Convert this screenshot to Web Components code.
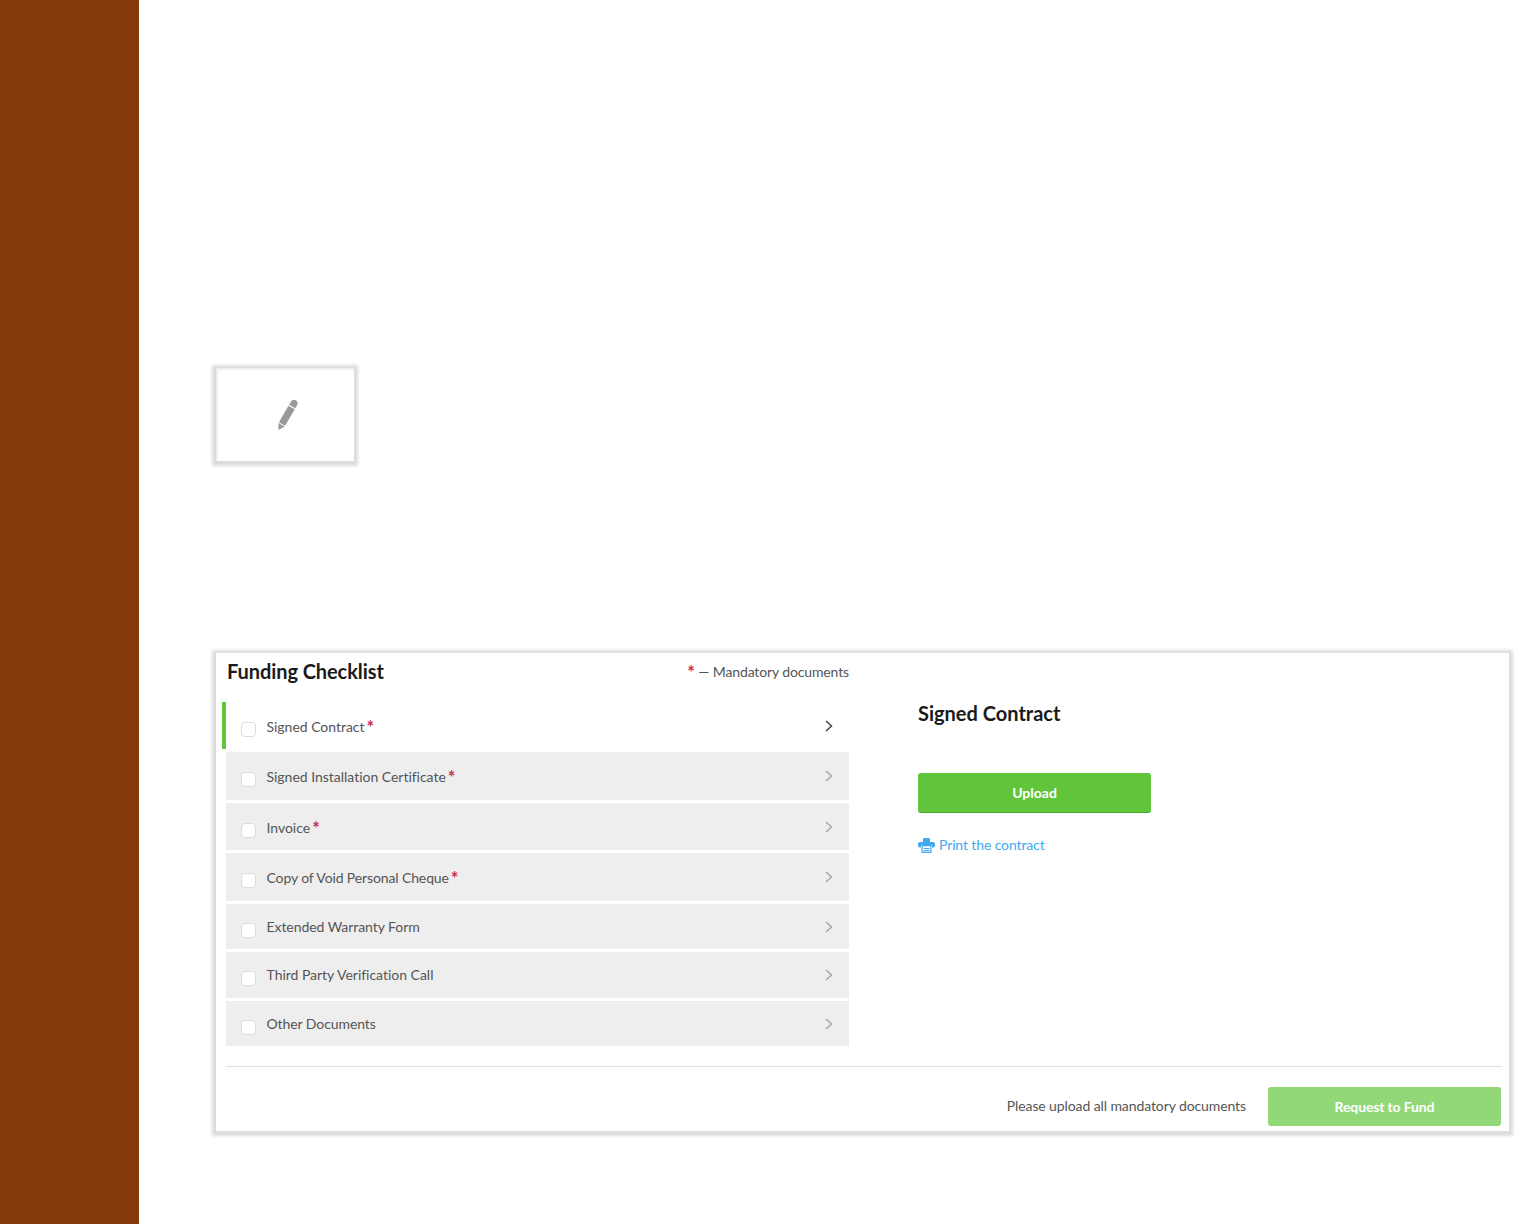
<!DOCTYPE html>
<html>
<head>
<meta charset="utf-8">
<title>Funding Checklist</title>
<style>
    html, body { margin: 0; padding: 0; background: #fff; }
    body { font-family: 'Lato', sans-serif; color: #555; height: 1224px; overflow: hidden; }
</style>
</head>
<body>
<app-shell>
    <signature-box></signature-box>
    <funding-checklist>
        <check-row active mandatory h="47">Signed Contract</check-row>
        <check-row mandatory h="48">Signed Installation Certificate</check-row>
        <check-row mandatory h="47">Invoice</check-row>
        <check-row mandatory h="48" style="--ls:-.12px">Copy of Void Personal Cheque</check-row>
        <check-row h="45" style="--ls:-.06px">Extended Warranty Form</check-row>
        <check-row h="46">Third Party Verification Call</check-row>
        <check-row h="45" style="--ls:-.08px">Other Documents</check-row>
    </funding-checklist>
</app-shell>
<script>
class AppShell extends HTMLElement {
    constructor() {
        super();
        this.attachShadow({ mode: 'open' });
        this.shadowRoot.innerHTML = `
            <style>
                :host { display: flex; height: 1224px; }
                .sidebar { width: 139px; flex: none; background: #833909; }
                .main {
                    flex: 1;
                    min-width: 0;
                    display: flex;
                    flex-direction: column;
                    gap: 192px;
                    padding: 368px 10px 0 77px;
                }
            </style>
            <div class="sidebar"></div>
            <div class="main"><slot></slot></div>
        `;
    }
}

class SignatureBox extends HTMLElement {
    constructor() {
        super();
        this.attachShadow({ mode: 'open' });
        this.shadowRoot.innerHTML = `
            <style>
                :host {
                    display: flex;
                    align-items: center;
                    justify-content: center;
                    width: 138px;
                    height: 93px;
                    box-sizing: border-box;
                    background: #fff;
                    border-top: 2px solid #efefef;
                    border-left: 2px solid #efefef;
                    box-shadow: 0 1px 3px 4px #dcdcdc;
                }
                svg { width: 24px; height: 34px; filter: blur(.7px); margin: 0 0 2px 3px; }
            </style>
            <svg viewBox="0 0 24 34">
                <path fill="#999" d="M19.300 10.300 13.100 6.700 15 3.400A3.600 3.600 0 0 1 21.200 7Z"/>
                <path fill="#999" d="M12.500 7.700 18.700 11.300 9.100 27.800 2.900 24.200Z"/>
                <path fill="#999" d="M2.400 25 8.600 28.600 2.500 32Z"/>
            </svg>
        `;
    }
}

class FundingChecklist extends HTMLElement {
    constructor() {
        super();
        this.attachShadow({ mode: 'open' });
        this.shadowRoot.innerHTML = `
            <style>
                :host {
                    display: block;
                    width: 1293px;
                    height: 478px;
                    box-sizing: border-box;
                    background: #fff;
                    box-shadow: 0 1px 3px 4px #dcdcdc;
                    padding: 0 7px 0 10px;
                    font-size: 14px;
                    line-height: 20px;
                }
                .columns { display: flex; height: 413px; }
                .left { width: 623px; flex: none; }
                .head {
                    display: flex;
                    justify-content: space-between;
                    height: 49px;
                    padding-top: 4px;
                    box-sizing: border-box;
                }
                h2 {
                    margin: 0;
                    font-size: 20px;
                    line-height: 28px;
                    font-weight: 700;
                    color: #1a1a1a;
                }
                .head h2 { margin-left: 1px; letter-spacing: -.08px; }
                .legend { padding-top: 5px; color: #555; letter-spacing: -.13px; }
                .legend i {
                    color: #c9304a;
                    font-style: normal;
                    font-weight: 700;
                    font-size: 18px;
                    line-height: 0;
                    letter-spacing: 0;
                    position: relative;
                    top: 2px;
                }
                .rows { display: flex; flex-direction: column; gap: 3px; }
                .right { padding: 46px 0 0 69px; }
                .upload {
                    display: block;
                    width: 233px;
                    height: 40px;
                    margin-top: 46px;
                    box-sizing: border-box;
                    border: 0;
                    border-bottom: 1px solid #46a925;
                    border-radius: 3px;
                    background: #60c53b;
                    color: #fff;
                    font: 700 14px 'Lato', sans-serif;
                }
                .print {
                    display: flex;
                    align-items: center;
                    gap: 4px;
                    margin-top: 22px;
                    color: #42a9f0;
                    font-size: 14px;
                    letter-spacing: -.12px;
                    text-decoration: none;
                }
                .footer {
                    display: flex;
                    justify-content: flex-end;
                    align-items: center;
                    gap: 22px;
                    height: 65px;
                    padding: 20px 1px 5px 0;
                    box-sizing: border-box;
                    border-top: 1px solid #e0e0e0;
                }
                .footer span { color: #555; letter-spacing: -.1px; margin-bottom: 2px; }
                .fund {
                    width: 233px;
                    height: 39px;
                    border: 0;
                    border-radius: 3px;
                    background: #92d878;
                    color: #fff;
                    font: 700 14px 'Lato', sans-serif;
                    letter-spacing: -.14px;
                }
            </style>
            <div class="columns">
                <div class="left">
                    <div class="head">
                        <h2>Funding Checklist</h2>
                        <div class="legend"><i>*</i> — Mandatory documents</div>
                    </div>
                    <div class="rows"><slot></slot></div>
                </div>
                <div class="right">
                    <h2>Signed Contract</h2>
                    <button class="upload">Upload</button>
                    <a class="print">
                        <svg width="17" height="15" viewBox="0 0 17 15">
                            <path fill="#42a9f0" d="M5 1a1 1 0 0 1 1-1h5a1 1 0 0 1 1 1v3.500H5zM2 4h13a2 2 0 0 1 2 2v1.500a2 2 0 0 1-2 2h-1V7H3v2.500H2a2 2 0 0 1-2-2V6a2 2 0 0 1 2-2z"/>
                            <path fill="#fff" stroke="#42a9f0" stroke-width="1.200" d="M4.100 7.600h8.800v6.800H4.100z"/>
                            <path fill="none" stroke="#42a9f0" stroke-width="1" d="M5.500 10.500h6M5.500 12.500h6"/>
                        </svg>
                        Print the contract
                    </a>
                </div>
            </div>
            <div class="footer">
                <span>Please upload all mandatory documents</span>
                <button class="fund">Request to Fund</button>
            </div>
        `;
    }
}

class CheckRow extends HTMLElement {
    constructor() {
        super();
        this.attachShadow({ mode: 'open' });
        const mandatory = this.hasAttribute('mandatory');
        const star = mandatory ? '<i>*</i>' : '';
        this.shadowRoot.innerHTML = `
            <style>
                :host {
                    display: flex;
                    align-items: center;
                    box-sizing: border-box;
                    height: ${this.getAttribute('h')}px;
                    padding: 0 16px 0 15px;
                    background: #eeeeee;
                    color: #555;
                    font-size: 14px;
                    position: relative;
                }
                :host([active]) { background: #fff; }
                :host([active])::before {
                    content: '';
                    position: absolute;
                    left: -4px;
                    top: 0;
                    bottom: 0;
                    width: 4px;
                    background: #60c53b;
                }
                .box {
                    width: 13px;
                    height: 13px;
                    margin-top: 7px;
                    border: 1px solid #dcdcdc;
                    border-radius: 4px;
                    background: #fff;
                    flex: none;
                }
                .label {
                    margin: ${mandatory ? '2px' : '0'} 0 0 10.500px;
                    flex: 1;
                    letter-spacing: var(--ls, -.02px);
                }
                i {
                    color: #c9304a;
                    font-style: normal;
                    font-weight: 700;
                    font-size: 18px;
                    line-height: 0;
                    margin-left: 2px;
                    position: relative;
                    top: 2px;
                }
                svg { flex: none; }
                :host([active]) path { stroke: #444; }
            </style>
            <span class="box"></span>
            <span class="label"><slot></slot>${star}</span>
            <svg width="8" height="12" viewBox="0 0 8 12"><path fill="none" stroke="#a8a8a8" stroke-width="1.500" d="M1 1l5.500 5-5.500 5"/></svg>
        `;
    }
}

customElements.define('app-shell', AppShell);
customElements.define('signature-box', SignatureBox);
customElements.define('funding-checklist', FundingChecklist);
customElements.define('check-row', CheckRow);
</script>
</body>
</html>
